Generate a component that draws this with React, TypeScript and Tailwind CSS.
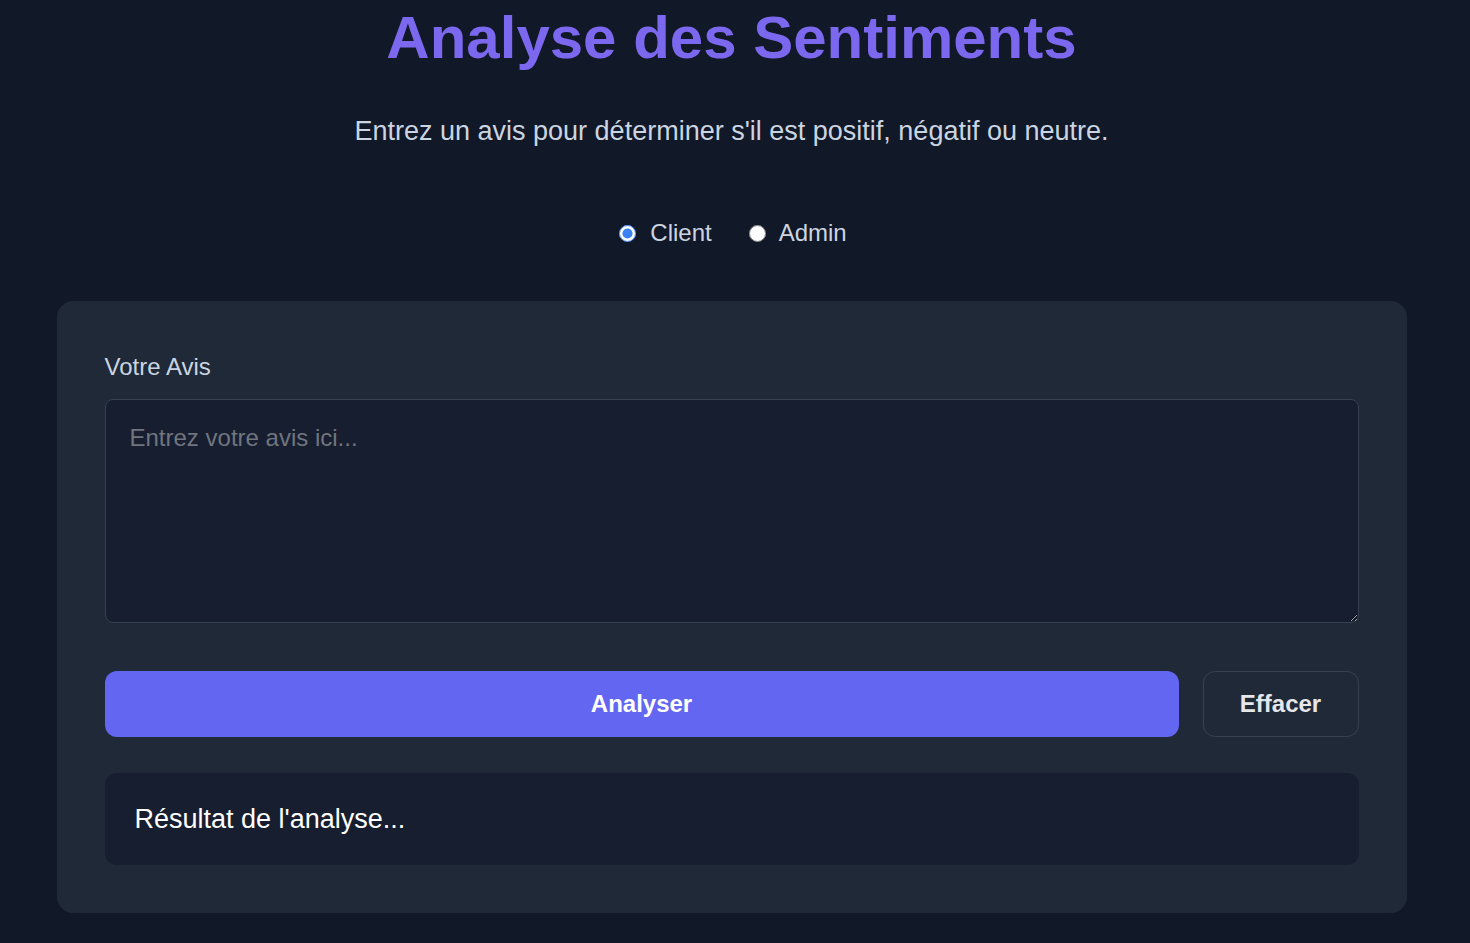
import { useState } from "react"

export default function App() {
  const [role, setRole] = useState("client")
  const [avis, setAvis] = useState("")

  return (
    <div
      className="min-h-screen bg-[#111827] text-[#e5e7eb] overflow-hidden"
      style={{ fontFamily: '"Liberation Sans", Arial, sans-serif' }}
    >
      <div className="w-[1463px] flex flex-col items-center">
        <h1 className="text-[60px] leading-none font-bold text-[#7b68ee] mt-[8px]">
          Analyse des Sentiments
        </h1>
        <p className="text-[27px] leading-[40px] text-[#cbd5e1] mt-[43px]">
          Entrez un avis pour déterminer s'il est positif, négatif ou neutre.
        </p>

        <div className="flex items-center gap-[37px] mt-[64px] h-9 text-[24px] text-[#cbd5e1] pl-[3px]">
          <label className="flex items-center gap-[14px] cursor-pointer">
            <input
              type="radio"
              name="role"
              checked={role === "client"}
              onChange={() => setRole("client")}
              className="w-[17px] h-[17px] accent-[#3b82f6]"
            />
            Client
          </label>
          <label className="flex items-center gap-[13px] cursor-pointer">
            <input
              type="radio"
              name="role"
              checked={role === "admin"}
              onChange={() => setRole("admin")}
              className="w-[17px] h-[17px] accent-[#3b82f6]"
            />
            Admin
          </label>
        </div>

        <div className="w-[1350px] bg-[#1f2937] rounded-2xl p-12 mt-[50px]">
          <label className="block text-[24px] leading-9 text-[#cbd5e1] mb-[14px]">Votre Avis</label>
          <textarea
            value={avis}
            onChange={(e) => setAvis(e.target.value)}
            placeholder="Entrez votre avis ici..."
            className="w-full h-[224px] bg-[#171e2f] border border-[#374151] rounded-lg px-6 py-5 text-[24px] leading-9 text-[#e5e7eb] placeholder:text-[#70757f] outline-none block"
          />
          <div className="flex gap-6 mt-12">
            <button className="flex-1 h-[66px] rounded-xl bg-[#6366f1] text-white text-[24px] font-bold">
              Analyser
            </button>
            <button
              onClick={() => setAvis("")}
              className="w-[156px] h-[66px] rounded-xl border border-[#374151] text-[#e5e7eb] text-[24px] font-bold"
            >
              Effacer
            </button>
          </div>
          <div className="mt-9 h-[92px] rounded-xl bg-[#171e2f] px-[30px] flex items-center text-[27px] text-white">
            Résultat de l'analyse...
          </div>
        </div>
      </div>
    </div>
  )
}
